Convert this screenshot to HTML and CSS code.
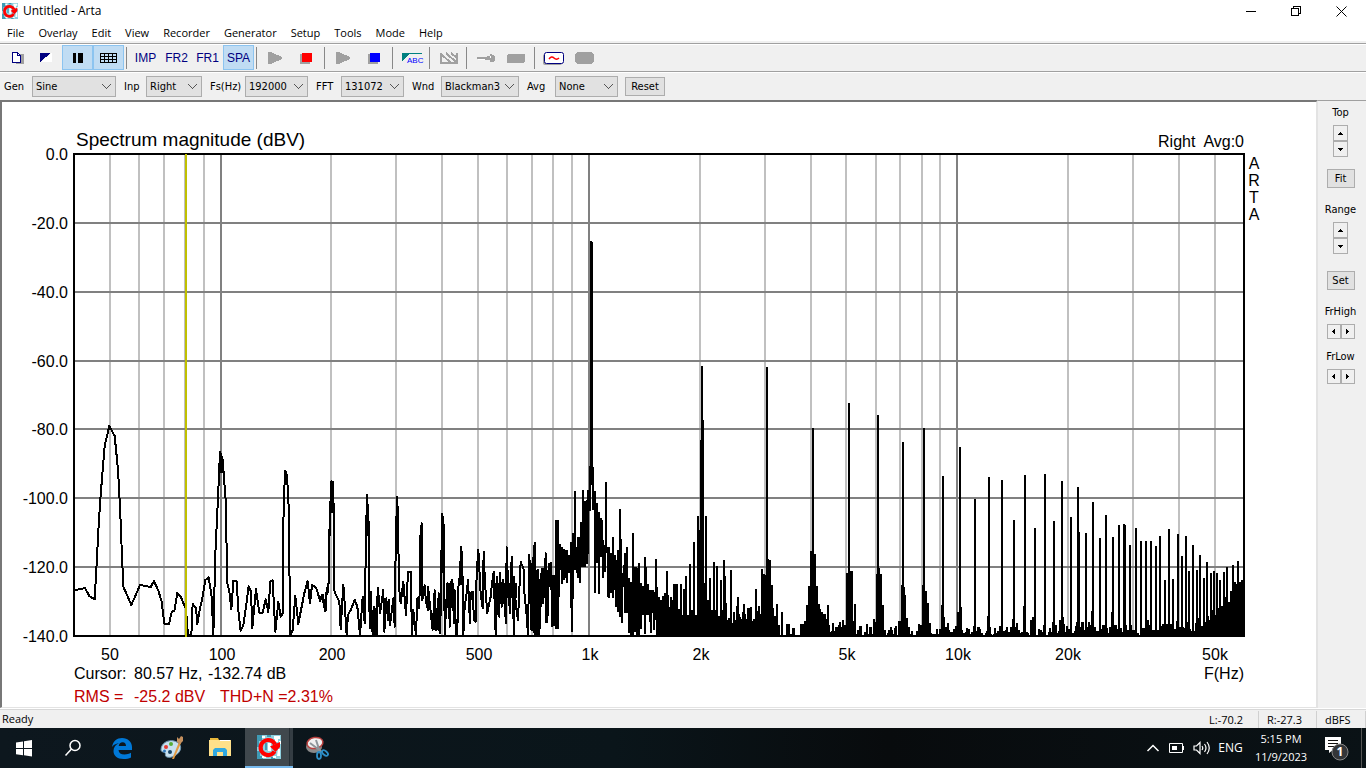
FILE: index.html
```html
<!DOCTYPE html>
<html lang="en">
<head>
<meta charset="utf-8">
<title>Untitled - Arta</title>
<link rel="stylesheet" href="styles.css">
</head>
<body>
<svg class="defs" aria-hidden="true">
  <symbol id="arta" viewBox="0 0 24 24">
    <path fill="#8fd0de" d="M0 0h24v24H0z"/>
    <path fill="#3f9ab4" d="M0 0h5v6H2v6H0zM0 16h3v5h3v3H0zM10 0h4v2h-4zM14 22h4v2h-4zM8 8h2v7H8z"/>
    <path fill="#fff" d="M5 1h3v2H5zM17 1h6v3h-2v3h-3V4h-1zM21 14h2v7h-4v2h-3v-2h4zM5 21h4v2H5zM11 8h3v8h-3zM22 6h2v3h-2z"/>
    <path fill="none" stroke="#f00" stroke-width="4.200" d="M18 9.500A7.500 7.500 0 1 0 17.500 16.500"/>
    <path fill="#f00" d="M13 11.500L23 7v5l-4.500 5z"/>
  </symbol>
  <symbol id="up" viewBox="0 0 7 7"><path d="M3 2h1v1h1v1h1v1H1V4h1V3h1z"/></symbol>
  <symbol id="down" viewBox="0 0 7 7"><path d="M1 2h5v1H5v1H4v1H3V4H2V3H1z"/></symbol>
  <symbol id="left" viewBox="0 0 7 7"><path d="M5 1v5H4V5H3V4H2V3h1V2h1V1z"/></symbol>
  <symbol id="right" viewBox="0 0 7 7"><path d="M2 1v5h1V5h1V4h1V3H4V2H3V1z"/></symbol>
</svg>

<header class="titlebar">
  <svg class="app-icon" viewBox="0 0 24 24"><use href="#arta"/></svg>
  <h1 class="title">Untitled - Arta</h1>
  <div class="window-buttons">
    <button aria-label="Minimize"><svg width="11" height="11"><path d="M0 5.500h10"/></svg></button>
    <button aria-label="Restore"><svg width="11" height="11"><path d="M.5 2.500h7v7h-7zM2.500 2.500v-2h7v7h-2"/></svg></button>
    <button aria-label="Close"><svg width="11" height="11"><path class="smooth" d="M.5.5l10 10M10.500.5l-10 10"/></svg></button>
  </div>
</header>

<nav class="menubar">
  <button>File</button><button>Overlay</button><button>Edit</button><button>View</button><button>Recorder</button><button>Generator</button><button>Setup</button><button>Tools</button><button>Mode</button><button>Help</button>
</nav>

<div class="toolbar">
  <button aria-label="Copy"><svg width="18" height="16"><path fill="#a0a0a0" d="M10 4h7v10H9V8z"/><path fill="#fff" stroke="#000080" d="M5.500 2.500h5l3 3v7h-8z"/><path fill="none" stroke="#000080" d="M10.500 2.500v3h3"/></svg></button>
  <button aria-label="Invert colors"><svg width="18" height="16"><path fill="#000080" d="M2 3h11L2 12z"/><path fill="#fff" d="M14 3v9H3z"/></svg></button>
  <button class="pressed" aria-label="Pause"><svg width="18" height="16"><path d="M4 3h3v10H4zM9 3h5v10H9z"/></svg></button>
  <button class="pressed" aria-label="Grid"><svg width="18" height="16"><path fill="none" stroke="#000" d="M.5 3.500h16v9H.5zM.5 6.500h16M.5 9.500h16M4.500 3v9M8.500 3v9M12.500 3v9"/></svg></button>
  <span class="sep"></span>
  <button>IMP</button><button>FR2</button><button>FR1</button><button class="pressed">SPA</button>
  <span class="sep"></span>
  <button aria-label="Play" disabled><svg width="18" height="16"><path fill="#a0a0a0" d="M1 2h3l11 5v2L4 14H1z"/></svg></button>
  <button aria-label="Record"><svg width="18" height="16"><path fill="#a0a0a0" d="M2 4h10v10H2z"/><path fill="#f00" d="M4 3h10v9H4z"/></svg></button>
  <span class="sep"></span>
  <button aria-label="Start generator" disabled><svg width="18" height="16"><path fill="#a0a0a0" d="M1 2h3l11 5v2L4 14H1z"/></svg></button>
  <button aria-label="Stop generator"><svg width="18" height="16"><path fill="#a0a0a0" d="M2 4h10v10H2z"/><path fill="#00f" d="M4 3h10v9H4z"/></svg></button>
  <span class="sep"></span>
  <button aria-label="Label"><svg class="abc" width="24" height="16"><path fill="#008080" d="M2 3h20v1H9l-7 7z"/><text x="7" y="13">ABC</text></svg></button>
  <span class="sep"></span>
  <button aria-label="Overlay" disabled><svg width="18" height="16"><path fill="none" stroke="#a0a0a0" stroke-width="2" d="M1 3v10h16V3M1 4l10 9M6 3l11 10M11 3l6 5"/></svg></button>
  <span class="sep"></span>
  <button aria-label="Key" disabled><svg width="18" height="16"><path fill="#a0a0a0" d="M0 7h10V6h3V4h2v1h2v1h1v5h-1v1h-4v-2H8V9H0z"/><path fill="#fff" d="M1 9h7v1H1zM13 6h1v2h-1z"/></svg></button>
  <button aria-label="Filter" disabled><svg width="20" height="16"><rect x="0" y="4" width="18" height="9" rx="2" fill="#a0a0a0"/></svg></button>
  <span class="sep"></span>
  <button aria-label="Signal"><svg class="smooth" width="22" height="16"><rect x="0" y="4" width="19" height="11" rx="2" fill="#a0a0a0"/><rect x="1.500" y="2.500" width="19" height="11" rx="2" fill="#fff" stroke="#000080"/><path fill="none" stroke="#f00" stroke-width="1.500" d="M6 9q2.500-3.500 5-1t5 0"/></svg></button>
  <button aria-label="Settings" disabled><svg width="20" height="16"><rect x="0" y="2" width="19" height="12" rx="4" fill="#a0a0a0"/></svg></button>
</div>

<div class="fields">
  <label for="gen">Gen</label><select id="gen"><option>Sine</option></select>
  <label for="inp">Inp</label><select id="inp"><option>Right</option></select>
  <label for="fs">Fs(Hz)</label><select id="fs"><option>192000</option></select>
  <label for="fft">FFT</label><select id="fft"><option>131072</option></select>
  <label for="wnd">Wnd</label><select id="wnd"><option>Blackman3</option></select>
  <label for="avg">Avg</label><select id="avg"><option>None</option></select>
  <button class="push reset">Reset</button>
</div>

<main class="workspace">
  <section class="chart-pane">
    <svg class="chart" viewBox="2 102 1314 605" role="img" aria-label="Spectrum magnitude">
      <path class="minor" d="M110 154V636M139 154V636M164 154V636M185 154V636M204 154V636M331 154V636M396 154V636M442 154V636M478 154V636M507 154V636M532 154V636M553 154V636M572 154V636M700 154V636M765 154V636M811 154V636M846 154V636M876 154V636M900 154V636M922 154V636M940 154V636M1068 154V636M1133 154V636M1179 154V636M1215 154V636"/>
      <path class="major" d="M74 223H1244M74 292H1244M74 361H1244M74 429H1244M74 498H1244M74 567H1244M221 154V636M589 154V636M957 154V636"/>
      <path class="frame" d="M74 154H1244V636H74z"/>

      <!-- 40 Hz to 200 Hz -->
      <g transform="translate(60 400) scale(.33333)"><path class="trace" d="M45 570L58 568 75 564 88 588 104 598 110 490 116 375 122 285 134 138 148 78 164 108 174 208 180 320 186 470 190 560 214 615 225 590 240 555 272 561 282 543 295 572 305 605 313 672 327 672 335 636 343 632 352 578 362 590 378 628 384 706 394 706 398 612 408 625 412 672 420 625 428 590 436 540 446 532 455 590 460 706 466 460 474 295 480 155 488 180 497 300 502 550 508 575 514 628 520 543 530 543 535 630 542 693 550 675 558 620 566 558 573 575 577 684 588 567 598 638 608 638 617 598 625 636 631 545 638 541 646 695 655 605 662 650 668 640 671 300 676 212 681 225 687 340 690 706 698 690 706 588 715 672 724 625 733 580 743 543 750 610 756 555 768 563 780 600 788 585 797 632 800 575 805 575 810 340"/><path d="M475 220L480 153l8 20 3 47z"/></g>
      <!-- 200 Hz to 700 Hz -->
      <g transform="translate(320 440) scale(.33333)"><path class="trace" d="M0 485L6 465 15 512 20 450 26 430 27 320 30 220 34 124 38 126 42 225 42 450 48 465 58 485 62 568 70 435 74 490 80 585 84 525 92 510 104 480 112 500 120 585 128 470 134 550 138 290 141 165 146 250 149 565 152 455 158 585 162 500 168 585 170 510 174 445 180 520 190 450 193 575 199 475 204 540 207 480 210 555 220 475 224 560 227 330 231 170 235 240 236 430 242 490 250 425 258 525 264 395 272 395 276 585 280 510 288 585 292 475 298 505 301 290 305 250 307 480 314 435 318 485 324 510 324 440 332 515 338 570 344 450 348 570 351 520 357 460 357 570 361 580 363 400 367 222 372 265 374 585 382 430 386 500 390 560 392 430 397 420 402 550 404 450 408 585 412 585 414 450 419 410 424 320 428 420 430 585 434 500 440 460 444 420 450 550 452 460 458 455 462 540 467 545 470 400 475 330 482 460 488 505 491 335 495 430 502 520 512 470 516 430 521 395 527 585 530 410 534 520 538 530 540 400 546 500 550 420 554 500 558 550 560 322 564 430 570 520 575 350 582 585 582 410 588 500 594 540 598 450 602 365 612 390 614 480 618 500 624 585 628 345 632 460 636 570 638 385 644 308 652 585 654 390 658 460 658 585 664 400 668 490 672 400 678 340 682 545 688 370"/>
      <path d="M30 220h12L38 124h-4zM138 287h11L146 250l-3-85h-5zM303 250h5v200h-5zM226 327h9V240l-4-70zM362 400h11V262l-4-40h-5zM160 505h14v80h-14zM341 510h20v60h-20zM381 430h20v75h-20zM416 400h12v35h-12zM526 430h34v60h-34zM560 430h32v45h-32zM626 390h28v95h-28zM640 390h10v190h-10zM664 390h22v75h-22z"/></g>
      <!-- around the 1 kHz fundamental -->
      <g transform="translate(530 440) scale(.33333)"><path class="trace" d="M3 370V570M10 375V512M15 308V585M21 390V585M26 430V530M32 400V500M37 385V478M43 400V475M48 338V548M52 405V480M57 400V440M62 367V450M67 405V560M72 405V558M79 240V568M84 240V568M86 315V470M91 312V390M97 322V432M102 327V420M107 330V415M112 330V430M117 345V400M122 307V505M125 310V575M129 280V478M134 154V390M140 320V400M145 290V415M149 290V428M153 245V380M159 150V382M165 184V382M171 180V372M175 150V342M180 78V213M185 0V135M190 80V210M194 154V458M200 190V370M206 215V463M212 235V350M215 240V350M219 300V415M224 315V395M229 126V340M233 320V472M238 320V475M244 338V460M249 292V475M254 345V450M258 360V500M264 330V515M269 207V530M273 298V530M276 400V550M281 375V440M286 340V520M291 322V520M296 415V580M302 425V585M308 280V585M313 380V575M317 380V575M321 385V585M326 370V585M332 430V568M338 438V525M344 350V582M349 380V525M354 432V525M359 450V545M363 450V580M368 450V520M372 455V570M377 358V540M382 440V585"/>
      <path d="M384 588V470H391V480H397V468H402V460H408V394H413V465H418V500H421V470H427V480H430V432H444V507H450V432H456V525H459V447H465V408H471V525H477V372H483V510H489V307H495V525H501V228H507V270H511V0H521V430H525V228H531V480H537V414H543V510H549V366H555V510H558V378H564V528H570V420H576V510H579V360H585V408H588V546H594V534H600V588z"/></g>
      <!-- 2.300 kHz to 12 kHz -->
      <g transform="translate(720 400) scale(.33333)"><path d="M0 708V540H6V648H9V480H15V528H18V610H21V660H24V654H30V510H36V668H39V636H45V660H48V618H51V591H57V642H60V651H63V657H66V636H69V612H75V642H78V657H81V624H90V621H96V663H99V657H105V567H111V633H114V618H120V642H123V507H129V522H135V525H138V0H144V477H148V480H153V555H159V624H162V648H168V612H174V675H180V706H183V636H189V706H198V672H210V702H216V684H225V706H240V672H252V663H258V615H264V558H270V453H276V84H282V462H288V558H294V612H300V627H303V636H309V642H318V657H321V615H327V675H330V696H333V693H336V669H342V693H345V681H354V675H357V666H363V681H366V660H372V675H378V519H384V9H390V513H399V663H402V612H408V702H411V690H417V678H426V706H432V696H438V672H444V702H447V681H456V702H459V657H465V666H468V522H471V45H477V504H480V522H486V615H492V690H498V706H501V699H504V690H510V681H516V690H519V702H522V684H525V678H531V706H534V663H543V555H546V126H552V561H555V585H558V654H564V681H570V702H573V693H579V706H588V693H594V672H600V675H606V555H609V84H615V573H621V609H627V669H633V699H636V702H648V687H654V702H657V687H663V615H666V228H672V651H675V681H681V669H687V690H690V696H699V687H705V678H711V636H717V141H723V621H726V690H729V699H735V696H738V684H744V687H750V702H753V696H759V678H762V297H768V693H771V681H780V708Z"/></g>
      <!-- 12 kHz to 60 kHz -->
      <g transform="translate(970 440) scale(.33333)"><path d="M-24 588V581H0V585H3V576H9V558H18V573H21V561H27V567H33V579H39V585H45V579H48V573H51V528H54V561H63V582H66V585H69V582H72V564H78V579H81V573H87V558H99V573H105V570H108V561H114V576H120V561H126V537H135V561H138V549H144V570H150V579H153V576H159V498H162V576H174V579H177V585H180V540H186V531H195V579H198V585H204V567H210V570H216V576H219V555H228V585H234V576H237V564H243V576H246V546H255V555H261V579H264V573H267V540H273V531H282V552H285V576H288V558H294V567H306V579H312V573H315V558H318V546H330V561H333V546H342V570H345V546H351V561H354V546H360V555H363V513H369V561H378V573H393V567H396V555H405V564H413V579H417V561H423V516H429V558H432V555H441V567H444V564H456V576H459V555H471V570H477V555H486V570H501V579H507V585H510V564H525V540H537V555H546V570H567V558H576V552H606V558H612V567H618V543H624V561H641V564H645V546H660V567H663V573H675V549H684V534H690V558H702V546H711V528H717V540H720V510H735V525H744V504H750V498H759V471H774V486H780V453H786V426H798V432H804V426H813V420H822V588Z"/>
      <path class="trace" d="M15 177V588M57 111V588M96 120V588M132 240V588M165 105V588M195 264V588M225 102V588M252 243V588M276 123V588M303 231V588M324 141V588M327 276V588M348 279V588M369 186V588M390 294V588M408 225V588M429 291V588M447 255V588M462 252V588M465 255V588M480 315V588M498 264V588M513 303V588M528 303V588M543 303V588M558 318V588M570 288V588M585 420V588M597 267V588M609 417V588M624 282V588M636 348V588M648 288V588M657 393V588M669 315V588M681 390V588M690 345V588M702 414V588M711 366V588M723 399V588M732 393V588M741 399V588M750 420V588M762 396V588M771 381V588M789 375V588M804 363V588"/></g>
      <path d="M590 241h2v1h1v240h-3zM701 366h2v54h1v120h-3zM766 367h2v60h-2z"/>
      <path class="cursor" d="M186 154V637"/>

      <text class="heading" x="76" y="146">Spectrum magnitude (dBV)</text>
      <g class="axis end">
        <text x="1244" y="147" xml:space="preserve">Right  Avg:0</text>
        <text x="68" y="160">0.0</text><text x="68" y="229">-20.0</text><text x="68" y="298">-40.0</text><text x="68" y="367">-60.0</text><text x="68" y="435">-80.0</text><text x="68" y="504">-100.0</text><text x="68" y="573">-120.0</text><text x="68" y="642">-140.0</text>
        <text x="1244" y="679">F(Hz)</text>
      </g>
      <g class="axis mid">
        <text x="110" y="660">50</text><text x="222" y="660">100</text><text x="332" y="660">200</text><text x="479" y="660">500</text><text x="590" y="660">1k</text><text x="701" y="660">2k</text><text x="847" y="660">5k</text><text x="958" y="660">10k</text><text x="1068" y="660">20k</text><text x="1215" y="660">50k</text>
        <text x="1254" y="169">A</text><text x="1254" y="186">R</text><text x="1254" y="203">T</text><text x="1254" y="220">A</text>
      </g>
      <text class="axis" x="74" y="679">Cursor:</text>
      <text class="axis" x="134" y="679">80.57 Hz,</text>
      <text class="axis" x="208" y="679">-132.74 dB</text>
      <text class="axis level" x="74" y="702">RMS =</text>
      <text class="axis level" x="134" y="702">-25.2 dBV</text>
      <text class="axis level" x="220" y="702">THD+N =2.31%</text>
    </svg>
  </section>

  <aside class="side">
    <span class="side-label">Top</span>
    <div class="spin"><button aria-label="Top up"><svg><use href="#up"/></svg></button><button aria-label="Top down"><svg><use href="#down"/></svg></button></div>
    <button class="push">Fit</button>
    <span class="side-label">Range</span>
    <div class="spin"><button aria-label="Range up"><svg><use href="#up"/></svg></button><button aria-label="Range down"><svg><use href="#down"/></svg></button></div>
    <button class="push set">Set</button>
    <span class="side-label">FrHigh</span>
    <div class="spin flat"><button aria-label="High limit down"><svg><use href="#left"/></svg></button><button aria-label="High limit up"><svg><use href="#right"/></svg></button></div>
    <span class="side-label">FrLow</span>
    <div class="spin flat"><button aria-label="Low limit down"><svg><use href="#left"/></svg></button><button aria-label="Low limit up"><svg><use href="#right"/></svg></button></div>
  </aside>
</main>

<footer class="status">
  <span class="ready">Ready</span><span class="cell">L:-70.2</span><span class="cell">R:-27.3</span><span class="cell last">dBFS</span>
</footer>

<div class="taskbar">
  <button aria-label="Start"><svg width="18" height="18"><path fill="#fff" d="M1 3.500l7-1V9H1zM9 2.300L17 1v8H9zM1 10h7v6.200l-7-1zM9 10h8v7.500l-8-1.200z"/></svg></button>
  <button aria-label="Search"><svg width="18" height="18" fill="none" stroke="#fff" stroke-width="1.500"><circle cx="11" cy="6.500" r="5"/><path d="M7.500 10L1.500 16.500"/></svg></button>
  <button aria-label="Edge"><svg width="24" height="24"><path fill="#0078d7" d="M2 11C3 5 7 2 12 2c6 0 10 4 10 9v3H8.500c.3 3 2.500 4.500 6 4.500 2.500 0 4.500-.7 6.500-1.700v4.700c-2 1-4.500 1.500-7.500 1.500C7 23 3.500 19.500 3.500 15c0-3.500 2-6.500 5.500-7.800C5.500 7.500 3.500 8.800 2 11zm6.700-1H16c0-2.500-1.200-3.800-3.300-3.800-2.300 0-3.700 1.600-4 3.800z"/></svg></button>
  <button aria-label="Paint"><svg width="26" height="26"><path fill="#c7e0ef" stroke="#719ab5" d="M3 15C3 8 10 4.500 16 6c5 1.300 8 5 6 9.500C20 20 13 23.500 9 22c-3-1-.5-3.500-2.500-4.500-1.300-.7-3.500-.7-3.500-2.500z"/><circle cx="8" cy="12" r="2" fill="#e53a32"/><circle cx="13" cy="9" r="2" fill="#55ad35"/><circle cx="6.500" cy="16" r="1.500" fill="#3179bd"/><circle cx="12" cy="17" r="2" fill="#164264"/><path fill="#e39a42" d="M21 7l2 1-7 16h-2z"/><path fill="#c4905e" d="M19 2l2 2 2-3 2 1v4l-3 3-3-2z"/></svg></button>
  <button aria-label="File Explorer"><svg width="24" height="22"><path fill="#e8b83b" d="M2 3V1h8l1 2z"/><path fill="#ffe08a" d="M1 3h22v16H1z"/><path fill="#fff" d="M12 3h10v1H12z"/><path fill="#31a8e0" d="M5 19v-6l2-2h10l2 2v6h-4v-4H9v4z"/></svg></button>
  <button class="active" aria-label="Arta"><svg width="24" height="24"><use href="#arta"/></svg></button>
  <button aria-label="Snipping Tool"><svg width="26" height="26"><ellipse cx="9" cy="12" rx="8" ry="6" fill="#8a8a8a"/><ellipse cx="10" cy="8" rx="8" ry="5.500" fill="#f1f1f1" stroke="#b8413f" stroke-width="1.500" transform="rotate(-10 10 8)"/><path stroke="#8d9499" stroke-width="2" d="M5 8l12 9M11 5l4 12"/><g fill="none" stroke="#2d8fc8" stroke-width="1.800"><ellipse cx="14" cy="20.500" rx="2" ry="3.500"/><ellipse cx="20" cy="18" rx="2" ry="3.500" transform="rotate(-50 20 18)"/></g></svg></button>
  <div class="tray">
    <button aria-label="Show hidden icons"><svg width="14" height="10" fill="none" stroke="#fff" stroke-width="1.500"><path d="M1.500 8L7 2.500 12.500 8"/></svg></button>
    <button aria-label="Battery"><svg width="16" height="10"><path fill="none" stroke="#fff" d="M.5.5h13v9H.5zM14.500 3v4"/><path fill="#fff" d="M3 3h5v4H3z"/></svg></button>
    <button aria-label="Volume"><svg width="17" height="14" fill="none" stroke="#fff" stroke-width="1.200"><path d="M1 5h2.500L7 1.500v11L3.500 9H1zM9 5q1.500 2 0 4M11.500 3q3 4 0 8M14 1q4.500 6 0 12"/></svg></button>
    <button class="lang">ENG</button>
    <button class="clock"><time>5:15 PM</time><time>11/9/2023</time></button>
    <button class="notify" aria-label="1 new notification"><svg width="28" height="26"><path fill="#fff" d="M1 2h16v13H9l-4 3v-3H1z"/><path stroke="#111" d="M4 5.500h10M4 8.500h10M4 11.500h7"/><circle cx="16" cy="17" r="8" fill="#343639" stroke="#888"/><text x="16" y="21">1</text></svg></button>
  </div>
</div>
</body>
</html>
```
FILE: styles.css
```css
* { box-sizing: border-box; }

body {
  margin: 0;
  height: 100vh;
  display: flex;
  flex-direction: column;
  overflow: hidden;
  background: #f0f0f0;
  color: #000;
  font: 12px/16px "Open Sans", "Noto Sans", sans-serif;
}

button {
  margin: 0;
  padding: 0;
  border: 0;
  background: none;
  color: inherit;
  font: inherit;
  white-space: nowrap;
}

svg { display: block; }
.defs { display: none; }

/* Title and menu */
.titlebar {
  display: flex;
  align-items: center;
  height: 22px;
  padding: 0 2px;
  background: #fff;
}
.app-icon { width: 16px; height: 16px; }
.title {
  flex: 1;
  margin: 0 0 0 5px;
  font-size: 12px;
  font-weight: 400;
}
.window-buttons { display: flex; }
.window-buttons button {
  display: grid;
  place-items: center;
  width: 45px;
  height: 22px;
}
.window-buttons svg { fill: none; stroke: #000; shape-rendering: crispEdges; }
.window-buttons .smooth { shape-rendering: auto; }
.menubar {
  display: flex;
  height: 19px;
  background: #fff;
  font-size: 11px;
}
.menubar button { padding: 1px 7px 0; line-height: 20px; }

/* Toolbars */
.toolbar, .fields {
  flex: none;
  border-top: 1px solid #a0a0a0;
  box-shadow: inset 0 1px #fff;
}
.toolbar {
  display: flex;
  height: 28px;
  margin-top: 2px;
  padding-top: 1px;
  color: #000080;
  font-family: "Liberation Sans", Arial, sans-serif;
}
.toolbar button {
  display: grid;
  place-items: center;
  width: 31px;
  height: 25px;
}
.toolbar .pressed {
  border: 1px solid #8cc4f0;
  background: #c0dcf3;
}
.toolbar svg { shape-rendering: crispEdges; }
.toolbar .smooth { shape-rendering: auto; }
.sep {
  width: 6px;
  height: 22px;
  margin-top: 2px;
  background: linear-gradient(#888, #888) 2px 0 / 1px 100% no-repeat;
}
.abc { overflow: visible; }
.abc text { fill: #00f; font: 8px "Liberation Sans", sans-serif; }

.fields, .side { font: 11px/14px "DejaVu Sans Condensed", "DejaVu Sans", sans-serif; }
.fields {
  display: grid;
  grid-template-columns: 32px 84px 30px 56px 43px 63px 33px 63px 37px 78px 36px 63px 47px;
  align-items: center;
  height: 29px;
  padding-top: 1px;
}
.fields label { padding-left: 8px; }
.fields label:first-child { padding-left: 4px; }
.fields select {
  height: 21px;
  padding: 0 3px;
  border: 1px solid #adadad;
  border-radius: 0;
  color: #000;
  font: inherit;
  appearance: none;
  background:
    linear-gradient(45deg, transparent 45%, #555 45% 58%, transparent 58%) right 8px center / 5px 5px no-repeat,
    linear-gradient(-45deg, transparent 45%, #555 45% 58%, transparent 58%) right 4px center / 5px 5px no-repeat,
    #e1e1e1;
}
.push {
  height: 19px;
  border: 1px solid #adadad;
  background: #e1e1e1;
}
.reset { margin-left: 7px; }

/* Chart and side controls */
.workspace { display: flex; flex: 1; min-height: 0; }
.chart-pane {
  flex: 1;
  min-width: 0;
  border: 2px solid;
  border-width: 2px 2px 1px;
  border-color: #777 #e3e3e3 #e3e3e3 #777;
  background: #fff;
}
.chart { width: 100%; height: 100%; }
.chart path { shape-rendering: crispEdges; }
.minor, .major, .frame, .trace, .cursor { fill: none; stroke-width: 2; }
.minor { stroke: #c0c0c0; }
.major { stroke: #808080; }
.frame { stroke: #000; }
.cursor { stroke: #c0c000; }
.trace { stroke: #000; stroke-width: 6; stroke-linejoin: round; }
.chart text { font-family: "Liberation Sans", Arial, sans-serif; }
.heading { font-size: 19px; }
.axis { font-size: 16px; }
.end { text-anchor: end; }
.mid { text-anchor: middle; }
.level { fill: #c00000; }

.side {
  display: flex;
  flex-direction: column;
  align-items: center;
  width: 48px;
  padding: 5px 3px 0 0;
  border-top: 1px solid #a0a0a0;
}
.side-label { margin-bottom: 5px; }
.side .push { width: 28px; margin: 12px 0 15px; }
.side .set { margin-top: 17px; }
.spin { display: flex; flex-direction: column; }
.spin button {
  display: grid;
  place-items: center;
  width: 15px;
  height: 16px;
  border: 1px solid #adadad;
  background: #f0f0f0;
}
.spin svg { width: 7px; height: 7px; shape-rendering: crispEdges; }
.flat { flex-direction: row; margin-bottom: 11px; }
.flat button { width: 14px; height: 15px; }

/* Status bar */
.status {
  display: flex;
  height: 20px;
  flex: none;
  align-items: center;
  padding-top: 1px;
  border-top: 1px solid #fff;
  box-shadow: inset 0 1px #d7d7d7;
  font-size: 11px;
}
.ready { flex: 1; padding-left: 2px; }
.cell { width: 58px; padding-left: 8px; border-right: 1px solid #d0d0d0; line-height: 17px; }
.cell.last { width: 49px; }

/* Taskbar */
.taskbar {
  display: flex;
  flex: none;
  gap: 1px;
  height: 40px;
  background: linear-gradient(90deg, #0d171e, #0a151a 45%, #080b0d 65%, #0a1216);
  color: #fff;
}
.taskbar > button { display: grid; place-items: center; width: 48px; }
.taskbar .active {
  border-bottom: 2px solid #76b9ed;
  background: linear-gradient(90deg, #40484d 44px, #252e34 44px 45px, #343d43 45px);
}
.tray { display: flex; align-items: center; margin-left: auto; padding-right: 4px; }
.tray button { display: grid; place-items: center; width: 24px; height: 40px; }
.tray .lang { width: 35px; font-size: 12px; }
.tray .clock { width: 66px; align-content: center; font-size: 11px; line-height: 18px; }
.tray .notify { width: 48px; border-right: 1px solid #555; }
.notify text { fill: #fff; font: bold 12px "Open Sans", sans-serif; text-anchor: middle; }
```
